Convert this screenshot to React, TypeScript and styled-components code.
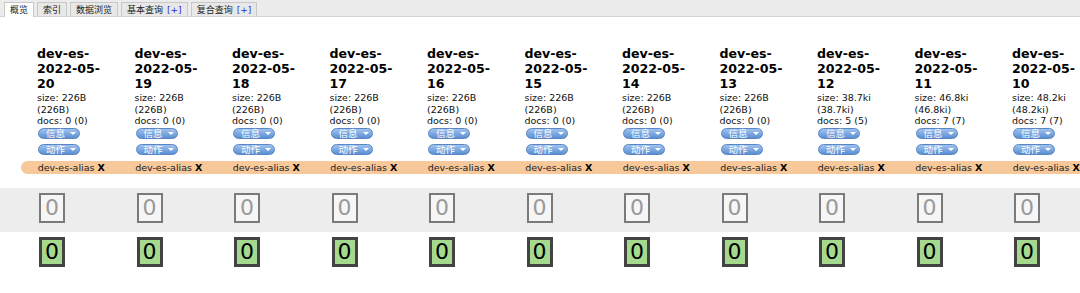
import styled, { createGlobalStyle } from 'styled-components';

const GlobalStyle = createGlobalStyle`
  html, body {
    margin: 0;
    padding: 0;
    background: #fff;
    overflow: hidden;
  }
  body {
    font-family: "DejaVu Sans", Verdana, "Noto Sans CJK SC", sans-serif;
    color: #000;
  }
`;

const COL = 97.5;

interface IndexInfo {
  name: string;
  size: string;
  docs: string;
}

const indices: IndexInfo[] = [
  { name: '20', size: '226B', docs: '0 (0)' },
  { name: '19', size: '226B', docs: '0 (0)' },
  { name: '18', size: '226B', docs: '0 (0)' },
  { name: '17', size: '226B', docs: '0 (0)' },
  { name: '16', size: '226B', docs: '0 (0)' },
  { name: '15', size: '226B', docs: '0 (0)' },
  { name: '14', size: '226B', docs: '0 (0)' },
  { name: '13', size: '226B', docs: '0 (0)' },
  { name: '12', size: '38.7ki', docs: '5 (5)' },
  { name: '11', size: '46.8ki', docs: '7 (7)' },
  { name: '10', size: '48.2ki', docs: '7 (7)' },
];

const Page = styled.div`
  width: 1080px;
  height: 293px;
  overflow: hidden;
`;

const TabBar = styled.div`
  height: 17px;
  background: #ececec;
  border-bottom: 1px solid #d4d4d4;
  display: flex;
  align-items: flex-end;
  gap: 3px;
  padding-left: 4px;
  box-sizing: border-box;
`;

const Tab = styled.div<{ $active?: boolean }>`
  height: ${(p) => (p.$active ? '15px' : '14px')};
  margin-bottom: ${(p) => (p.$active ? '-1px' : '0')};
  padding: 0 5px;
  box-sizing: border-box;
  border: 1px solid #c8c8c8;
  border-bottom: none;
  background: ${(p) => (p.$active ? '#fff' : '#e8e8e8')};
  font-family: "Noto Sans CJK SC", sans-serif;
  font-size: 9px;
  line-height: 13px;
  color: #222;
  white-space: nowrap;

  span {
    color: #2a2ae6;
    font-family: "DejaVu Sans", sans-serif;
    margin-left: 4px;
  }
`;

const Grid = styled.div`
  margin-left: 22px;
  display: grid;
  grid-template-columns: repeat(11, ${COL}px);
`;

const Header = styled.div`
  padding: 29px 0 0 15px;
  width: 72px;
`;

const Title = styled.div`
  font-weight: bold;
  font-size: 12.6px;
  line-height: 15px;
`;

const Meta = styled.div`
  font-size: 9.5px;
  line-height: 11.5px;
  color: #111;
  margin-top: 1px;
`;

const Buttons = styled.div`
  display: flex;
  flex-direction: column;
`;

const Pill = styled.div`
  margin-top: 5px;
  margin-left: 1px;
  width: 42px;
  height: 11px;
  border-radius: 6px;
  background: linear-gradient(#a0c3ee, #5b8fd3);
  border: 1px solid #5a86c4;
  box-sizing: border-box;
  display: flex;
  align-items: center;
  padding-left: 7px;
  gap: 5px;
  color: #fff;
  font-family: "Noto Sans CJK SC", sans-serif;
  font-size: 9.5px;
  line-height: 9px;

  &:first-child {
    margin-top: 1px;
  }

  &::after {
    content: '';
    border-left: 3px solid transparent;
    border-right: 3px solid transparent;
    border-top: 3px solid #fff;
  }
`;

const AliasBand = styled.div`
  margin: 6px 0 14px 21px;
  height: 13px;
  width: 1100px;
  border-radius: 7px;
  background: #f7c89a;
  display: grid;
  grid-template-columns: repeat(11, ${COL}px);
`;

const Alias = styled.div`
  text-align: center;
  font-size: 9.5px;
  line-height: 13px;
  color: #222;
  padding-left: 3px;

  b {
    color: #000;
    margin-left: 3px;
  }
`;

const ShardRow = styled.div<{ $gray?: boolean }>`
  background: ${(p) => (p.$gray ? '#ededed' : 'transparent')};
  height: ${(p) => (p.$gray ? '44px' : '40px')};
  padding-top: 5px;
  box-sizing: border-box;
  display: grid;
  grid-template-columns: repeat(11, ${COL}px);
  padding-left: 39px;
`;

const Shard = styled.div<{ $primary?: boolean }>`
  width: 26px;
  height: 30px;
  box-sizing: border-box;
  border: ${(p) => (p.$primary ? '3px solid #434343' : '2px solid #7a7a7a')};
  background: ${(p) => (p.$primary ? '#a5da8e' : '#f6f6f6')};
  color: ${(p) => (p.$primary ? '#000' : '#9a9a9a')};
  font-family: "DejaVu Sans", sans-serif;
  font-size: 22px;
  line-height: ${(p) => (p.$primary ? '24px' : '26px')};
  text-align: center;
`;

const App = () => {
  return (
    <Page>
      <GlobalStyle />
      <TabBar>
        <Tab $active>概览</Tab>
        <Tab>索引</Tab>
        <Tab>数据浏览</Tab>
        <Tab>
          基本查询<span>[+]</span>
        </Tab>
        <Tab>
          复合查询<span>[+]</span>
        </Tab>
      </TabBar>
      <Grid>
        {indices.map((ix) => (
          <Header key={ix.name}>
            <Title>dev-es-2022-05-{ix.name}</Title>
            <Meta>
              <div>size: {ix.size}</div>
              <div>({ix.size})</div>
              <div>docs: {ix.docs}</div>
            </Meta>
            <Buttons>
              <Pill>信息</Pill>
              <Pill>动作</Pill>
            </Buttons>
          </Header>
        ))}
      </Grid>
      <AliasBand>
        {indices.map((ix) => (
          <Alias key={ix.name}>
            dev-es-alias<b>X</b>
          </Alias>
        ))}
      </AliasBand>
      <ShardRow $gray>
        {indices.map((ix) => (
          <Shard key={ix.name}>0</Shard>
        ))}
      </ShardRow>
      <ShardRow>
        {indices.map((ix) => (
          <Shard key={ix.name} $primary>
            0
          </Shard>
        ))}
      </ShardRow>
    </Page>
  );
};

export default App;
